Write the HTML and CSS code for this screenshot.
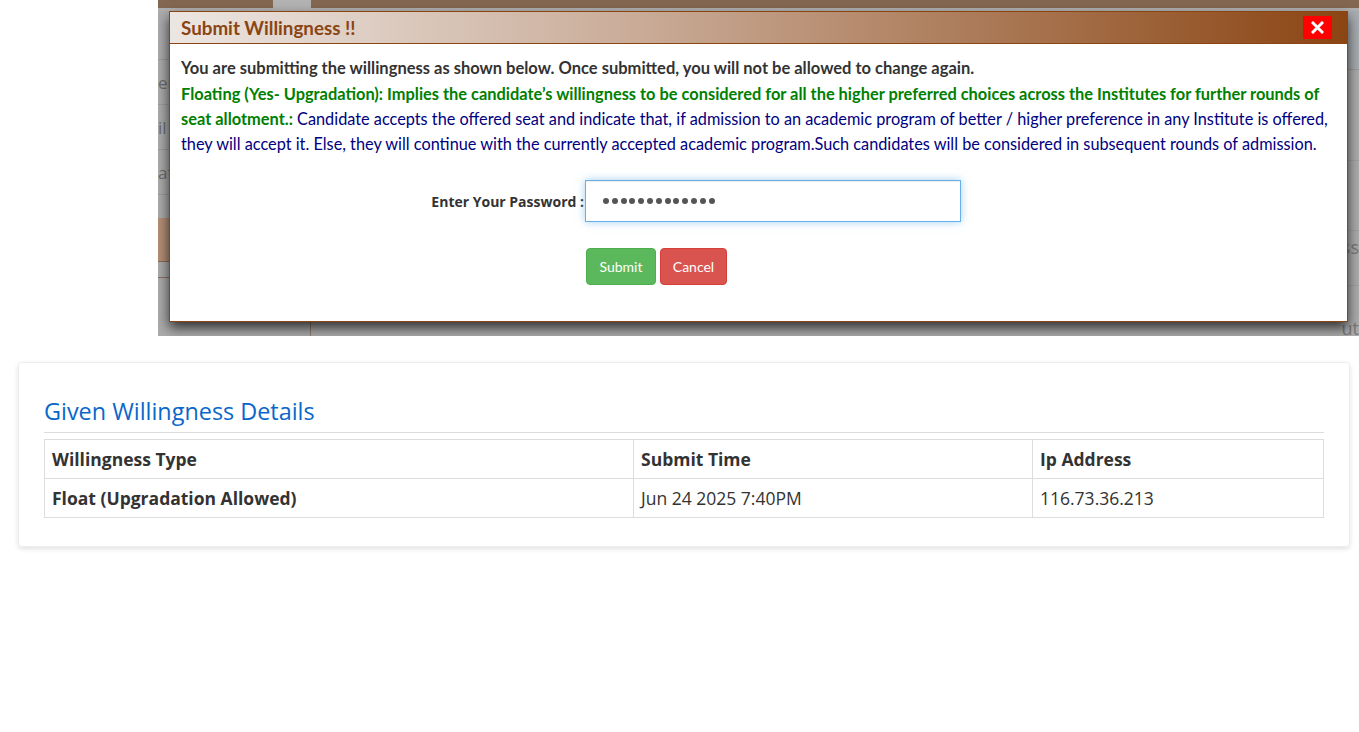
FILE: index.html
```html
<!DOCTYPE html>
<html lang="en">
<head>
<meta charset="utf-8">
<title>Given Willingness Details</title>
<link rel="stylesheet" href="styles.css">
</head>
<body>
<div class="shot">
  <div class="bg-top"><span class="bg-tab"></span></div>
  <div class="bg-body">
    <div class="bg-side">
      <div class="bg-item bg-first"></div>
      <div class="bg-item"><span>er</span></div>
      <div class="bg-item"><span>il</span></div>
      <div class="bg-item"><span>at</span></div>
      <div class="bg-space"></div>
      <div class="bg-item bg-active"></div>
      <div class="bg-item bg-last"></div>
    </div>
    <div class="bg-main">
      <div class="bg-head"></div>
      <div class="bg-row"></div>
      <div class="bg-row bg-row-b"></div>
      <div class="bg-row bg-row-c"><span>ss</span></div>
      <div class="bg-row bg-row-d"><span>ut</span></div>
    </div>
  </div>

  <div class="modal">
    <div class="modal-head">
      <span class="modal-title">Submit Willingness !!</span>
      <span class="modal-close"><svg width="13" height="13" viewBox="0 0 13 13"><path d="M2 2 L11 11 M11 2 L2 11" stroke="#fff" stroke-width="3" stroke-linecap="square"/></svg></span>
    </div>
    <div class="modal-body">
      <p class="msg">You are submitting the willingness as shown below. Once submitted, you will not be allowed to change again.</p>
      <p class="info"><b class="green">Floating (Yes- Upgradation): Implies the candidate’s willingness to be considered for all the higher preferred choices across the Institutes for further rounds of seat allotment.:</b> Candidate accepts the offered seat and indicate that, if admission to an academic program of better / higher preference in any Institute is offered, they will accept it. Else, they will continue with the currently accepted academic program.Such candidates will be considered in subsequent rounds of admission.</p>
      <div class="pw-row">
        <label class="pw-label">Enter Your Password :</label>
        <div class="pw-input"><i></i><i></i><i></i><i></i><i></i><i></i><i></i><i></i><i></i><i></i><i></i><i></i><i></i></div>
      </div>
      <div class="btn-row">
        <button class="btn btn-ok">Submit</button>
        <button class="btn btn-cancel">Cancel</button>
      </div>
    </div>
  </div>
</div>

<div class="card">
  <h3 class="card-title">Given Willingness Details</h3>
  <hr class="card-rule">
  <table class="details">
    <colgroup><col class="c1"><col class="c2"><col class="c3"></colgroup>
    <tr class="head"><td>Willingness Type</td><td>Submit Time</td><td>Ip Address</td></tr>
    <tr><td class="strong">Float (Upgradation Allowed)</td><td>Jun 24 2025 7:40PM</td><td>116.73.36.213</td></tr>
  </table>
</div>
</body>
</html>
```
FILE: styles.css
```css
html, body {
  margin: 0;
  padding: 0;
  background: #fff;
}
body {
  width: 1359px;
  height: 732px;
  overflow: hidden;
  font-family: "Open Sans", "Liberation Sans", sans-serif;
}

/* ---------- dimmed screenshot area ---------- */
.shot {
  margin-left: 158px;
  width: 1201px;
  height: 336px;
  position: relative;
  overflow: hidden;
  background: #adadad;
}
.bg-top {
  height: 8px;
  background: #846750;
  border-bottom: 3px solid #b0b0b0;
  display: flex;
}
.bg-tab {
  margin-left: 115px;
  width: 38px;
  height: 11px;
  background: #b3b3b3;
}
.bg-body {
  display: grid;
  grid-template-columns: 153px 1fr;
  height: 325px;
}
.bg-side {
  display: flex;
  flex-direction: column;
  border-right: 1px solid #8f7a6c;
  background: #acacac;
}
.bg-item {
  height: 44px;
  border-bottom: 1px solid #9d9d9d;
  display: flex;
  align-items: center;
  padding-left: 0;
  font-size: 17px;
  color: #6e6e6e;
  white-space: nowrap;
}
.bg-item.bg-first { height: 48px; }
.bg-space { height: 23px; }
.bg-item.bg-active {
  background: #b68f77;
  border-bottom: 1px solid #8d6a55;
  height: 43px;
}
.bg-item.bg-last { height: 15px; border-bottom: 1px solid #8a7062; }
.bg-main {
  display: flex;
  flex-direction: column;
}
.bg-head {
  height: 58px;
  background: #a8adb1;
  border-bottom: 1px solid #9b9b9b;
}
.bg-row {
  height: 90px;
  border-bottom: 1px solid #a3a3a3;
  display: flex;
  align-items: flex-start;
  justify-content: flex-end;
  font-size: 18px;
  line-height: 24px;
  color: #7a7a7a;
  white-space: nowrap;
}
.bg-row-b { height: 69px; }
.bg-row-c { height: 55px; padding-top: 4px; box-sizing: border-box; }
.bg-row-d { height: 60px; padding-top: 30px; box-sizing: border-box; border-bottom: 0; }

/* ---------- modal ---------- */
.modal {
  position: absolute;
  left: 11px;
  top: 11px;
  width: 1179px;
  height: 311px;
  box-sizing: border-box;
  background: #fff;
  border: 1px solid #8b4513;
  box-shadow: 0 6px 12px rgba(0, 0, 0, 0.72);
}
.modal-head {
  height: 31px;
  border-bottom: 1px solid #8b4513;
  background: linear-gradient(to right, #ece6e2 0%, #c9ab97 40%, #8b4513 100%);
  display: flex;
  align-items: center;
  justify-content: space-between;
  padding: 0 15px 0 11px;
}
.modal-title {
  font-family: Lato, "Open Sans", sans-serif;
  font-weight: 700;
  font-size: 18.8px;
  color: #8b4513;
}
.modal-close {
  width: 29px;
  height: 23px;
  background: #ff0000;
  display: flex;
  align-items: center;
  justify-content: center;
}
.modal-body {
  padding: 12px 11px 0 11px;
  font-family: Lato, "Open Sans", sans-serif;
  font-size: 16.5px;
  line-height: 25px;
}
.msg {
  margin: 0;
  font-weight: 700;
  color: #333;
}
.info {
  margin: 0;
  color: #000080;
  font-size: 16.3px;
}
.green {
  color: #008000;
  font-size: 16.4px;
}
.pw-row {
  display: grid;
  grid-template-columns: 404px 376px;
  align-items: center;
  margin-top: 24px;
}
.pw-label {
  font-family: "Open Sans", sans-serif;
  font-weight: 700;
  font-size: 14px;
  color: #333;
  text-align: right;
  padding-right: 1px;
}
.pw-input {
  height: 42px;
  box-sizing: border-box;
  border: 1px solid #66afe9;
  box-shadow: inset 0 1px 1px rgba(0, 0, 0, 0.075), 0 0 8px rgba(102, 175, 233, 0.6);
  display: flex;
  align-items: center;
  gap: 2.8px;
  padding-left: 17px;
}
.pw-input i {
  width: 6px;
  height: 6px;
  border-radius: 50%;
  background: #555;
}
.btn-row {
  display: flex;
  gap: 4px;
  margin: 26px 0 0 405px;
}
.btn {
  height: 37px;
  border-radius: 4px;
  font-family: Lato, "Open Sans", sans-serif;
  font-size: 14px;
  color: #fff;
  padding: 0;
  cursor: pointer;
}
.btn-ok {
  width: 70px;
  background: #5cb85c;
  border: 1px solid #4cae4c;
}
.btn-cancel {
  width: 67px;
  background: #d9534f;
  border: 1px solid #d43f3a;
}

/* ---------- card ---------- */
.card {
  margin: 26px 0 0 18px;
  width: 1332px;
  box-sizing: border-box;
  border: 1px solid #ededed;
  border-radius: 4px;
  box-shadow: 0 2px 5px rgba(0, 0, 0, 0.12);
  padding: 35px 25px 28px 25px;
}
.card-title {
  margin: 0;
  font-weight: 400;
  font-size: 23.4px;
  line-height: 26px;
  color: #0a67c9;
}
.card-rule {
  margin: 8px 0 6px 0;
  border: 0;
  border-top: 1px solid #dcdcdc;
  height: 0;
}
.details {
  width: 100%;
  border-collapse: collapse;
  font-size: 17.5px;
  color: #333;
}
.details col.c1 { width: 589px; }
.details col.c2 { width: 399px; }
.details td {
  border: 1px solid #ddd;
  padding: 8px 7px;
  line-height: 22px;
}
.details .head td,
.details td.strong {
  font-weight: 700;
}
```
